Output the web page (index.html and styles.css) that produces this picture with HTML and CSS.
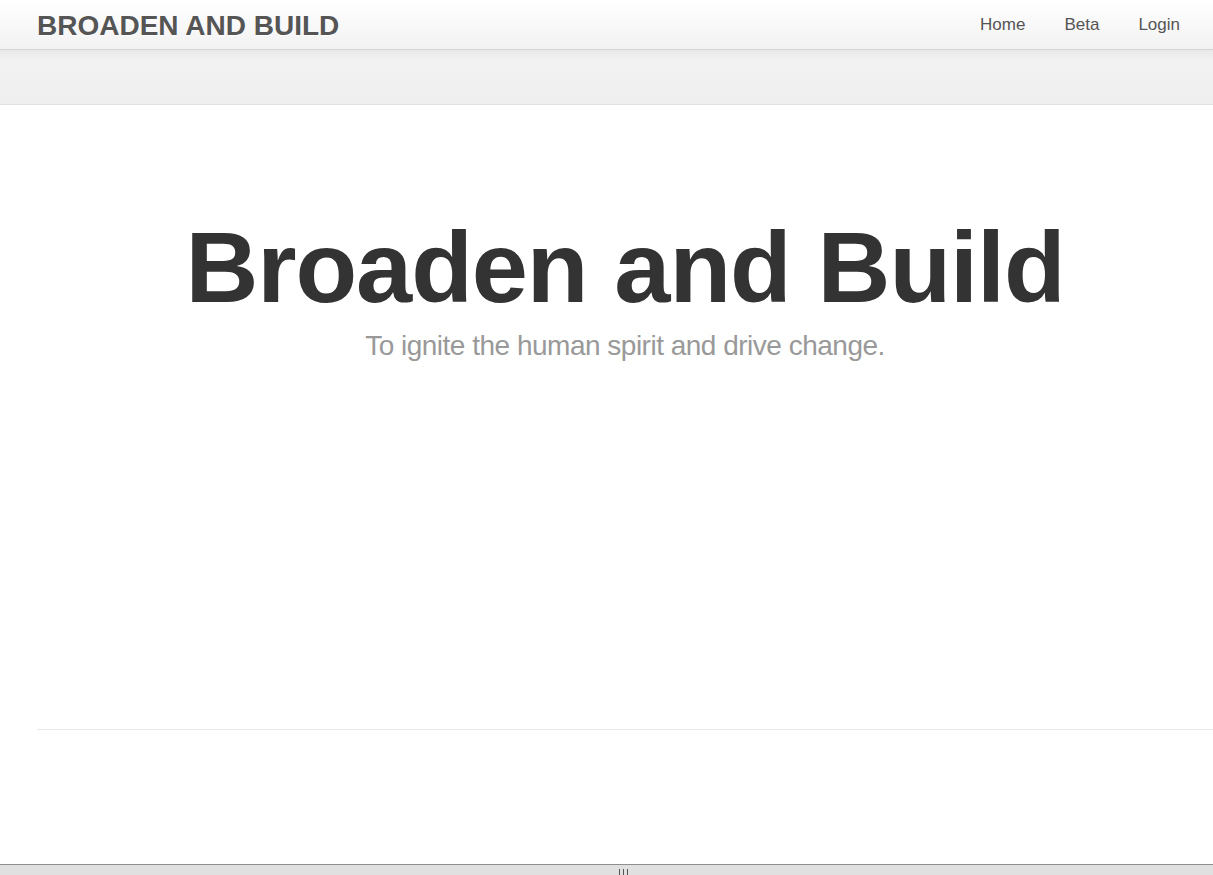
FILE: index.html
```html
<!DOCTYPE html>
<html>
<head>
<meta charset="utf-8">
<link rel="stylesheet" href="styles.css">
</head>
<body>
<header class="navbar">
  <a class="brand" href="#">BROADEN AND BUILD</a>
  <nav class="nav">
    <a href="#">Home</a>
    <a href="#">Beta</a>
    <a href="#">Login</a>
  </nav>
</header>
<div class="subbar"></div>
<main class="content">
  <section class="hero">
    <h1>Broaden and Build</h1>
    <p>To ignite the human spirit and drive change.</p>
  </section>
  <hr class="rule">
</main>
<div class="splitter"><span class="grip"></span></div>
</body>
</html>
```

FILE: styles.css
```css
html, body {
  margin: 0;
  padding: 0;
  height: 100%;
  overflow: hidden;
}
body {
  font-family: "Liberation Sans", Arial, sans-serif;
  background: #fff;
  color: #333;
}
.navbar {
  height: 49px;
  border-bottom: 1px solid #d4d4d4;
  background: linear-gradient(#ffffff, #f2f2f2);
  display: flex;
  align-items: center;
  justify-content: space-between;
  padding: 0 33px 0 37px;
}
.brand {
  font-size: 28px;
  font-weight: bold;
  color: #555;
  text-decoration: none;
  letter-spacing: 0;
  text-shadow: 0 1px 0 #fff;
  margin-top: 2px;
}
.nav {
  display: flex;
  gap: 39px;
  margin-top: 1px;
}
.nav a {
  font-size: 17px;
  color: #555;
  text-decoration: none;
}
.subbar {
  height: 54px;
  border-bottom: 1px solid #e2e2e2;
  background: linear-gradient(#e8e8e8, #f2f2f2 20%, #efefef);
}
.content {
  padding-top: 112px;
}
.hero {
  text-align: center;
  padding-left: 37px;
}
.hero h1 {
  margin: 0;
  font-size: 101px;
  line-height: 1;
  font-weight: bold;
  color: #333;
  letter-spacing: -1.1px;
}
.hero p {
  margin: 12px 0 0;
  font-size: 28px;
  color: #999;
  letter-spacing: -0.5px;
}
.rule {
  margin: 367px 0 0 37px;
  border: 0;
  border-top: 1px solid #e9e9e9;
  border-bottom: 1px solid #fff;
}
.splitter {
  position: fixed;
  left: 0;
  right: 0;
  bottom: 0;
  height: 10px;
  border-top: 1px solid #8e8e8e;
  background: #e0e0e0;
  display: flex;
  justify-content: center;
}
.grip {
  width: 10px;
  height: 6px;
  margin-top: 4px;
  margin-left: 34px;
  background: repeating-linear-gradient(90deg, #555 0 1px, transparent 1px 4px);
}
```
